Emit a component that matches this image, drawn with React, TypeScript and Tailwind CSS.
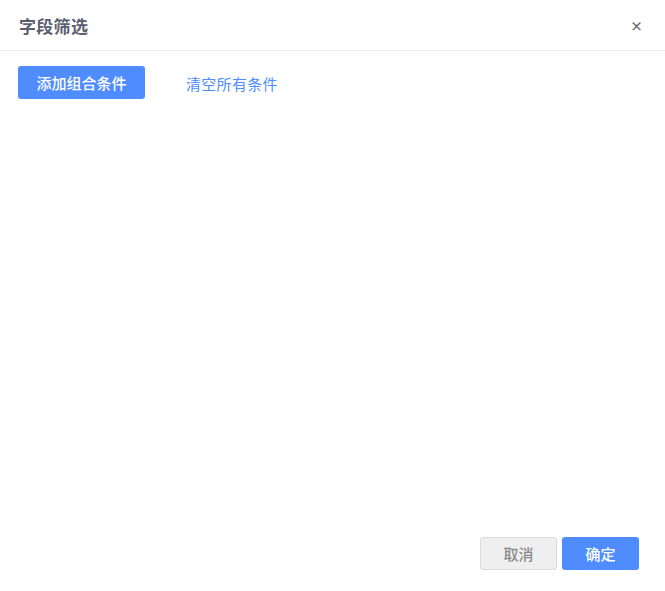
import React from "react";

export default function App() {
  const font = { fontFamily: '"Noto Sans CJK SC", "Noto Sans", sans-serif' };
  return (
    <div className="w-[665px] h-[591px] bg-white flex flex-col" style={font}>
      <div className="h-[51px] border-b border-[#e8e8ee] flex items-center justify-between pl-[19px] pr-[22px] shrink-0">
        <span className="text-[17px] font-bold text-[#5a5e6e] leading-none tracking-[0.3px]">字段筛选</span>
        <span className="text-[13px] font-bold text-[#6a6a6a] leading-none mt-[1px]">×</span>
      </div>
      <div className="flex items-center pl-[18px] pt-[15px]">
        <button className="h-[33px] w-[127px] rounded-[3px] bg-[#4f8cff] text-white text-[15px] font-medium leading-none">
          添加组合条件
        </button>
        <span className="ml-[41px] text-[15px] text-[#4f8cff] leading-none mt-[2px] tracking-[0.3px]">清空所有条件</span>
      </div>
      <div className="flex-1" />
      <div className="flex justify-end gap-[5px] pr-[26px] pb-[21px]">
        <button className="h-[33px] w-[77px] rounded-[3px] bg-[#efefef] border border-[#dcdcdc] text-[#8a8a8a] text-[15px] font-medium leading-none">
          取消
        </button>
        <button className="h-[33px] w-[77px] rounded-[3px] bg-[#4f8cff] text-white text-[15px] font-medium leading-none">
          确定
        </button>
      </div>
    </div>
  );
}
